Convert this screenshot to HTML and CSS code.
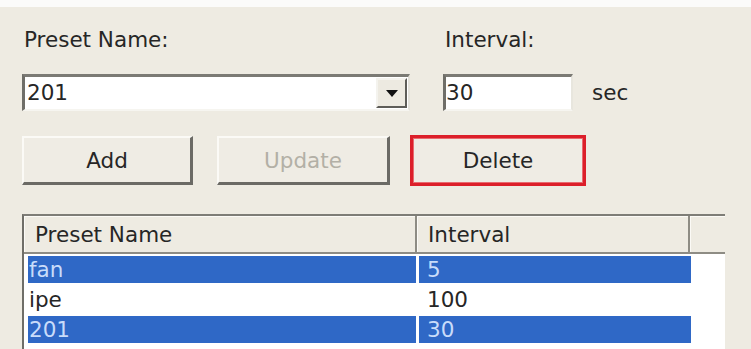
FILE: index.html
```html
<!DOCTYPE html>
<html>
<head>
<meta charset="utf-8">
<link rel="stylesheet" href="styles.css">
</head>
<body>
<div class="top"></div>
<div class="panel">
  <div class="labels">
    <div class="lbl-name">Preset Name:</div>
    <div class="lbl-int">Interval:</div>
  </div>
  <div class="fields">
    <div class="combo">
      <span class="combo-text">201</span>
      <span class="drop"><svg width="12" height="7" viewBox="0 0 12 7"><path d="M0 0H12L6 7Z" fill="#111"/></svg></span>
    </div>
    <div class="input">30</div>
    <div class="unit">sec</div>
  </div>
  <div class="buttons">
    <div class="btn btn-add">Add</div>
    <div class="btn btn-update">Update</div>
    <div class="btn btn-delete">Delete</div>
  </div>
  <div class="list">
    <div class="head">
      <div class="hcell h1">Preset Name</div>
      <div class="hcell h2">Interval</div>
      <div class="hcell h3"></div>
    </div>
    <div class="row sel"><div class="c1">fan</div><div class="c2">5</div></div>
    <div class="row"><div class="c1">ipe</div><div class="c2">100</div></div>
    <div class="row sel"><div class="c1">201</div><div class="c2">30</div></div>
  </div>
</div>
</body>
</html>
```

FILE: styles.css
```css
html, body {
  margin: 0;
  padding: 0;
  width: 751px;
  height: 349px;
  overflow: hidden;
  background: #eeebe2;
  font-family: "DejaVu Sans", Verdana, sans-serif;
  font-size: 21.5px;
  color: #262626;
}
.top {
  height: 7px;
  background: #fbfbfa;
}
.panel {
  padding: 21px 0 0 22px;
}
.labels {
  display: flex;
  height: 24px;
  line-height: 24px;
}
.lbl-name {
  width: 421px;
  padding-left: 2px;
  box-sizing: border-box;
}
.lbl-int {
  padding-left: 2px;
}
.fields {
  display: flex;
  align-items: center;
  margin-top: 22px;
  height: 37px;
}
.combo {
  width: 388px;
  height: 37px;
  box-sizing: border-box;
  background: #fff;
  border-top: 3px solid #7b7a74;
  border-left: 3px solid #6f6e68;
  border-right: 2px solid #e4e2da;
  border-bottom: 2px solid #f6f5f0;
  display: flex;
  align-items: center;
  justify-content: space-between;
  margin-right: 33px;
}
.combo-text {
  padding-left: 2px;
  line-height: 30px;
}
.drop {
  width: 31px;
  height: 30px;
  box-sizing: border-box;
  background: #edeae1;
  border-top: 2px solid #f4f3ee;
  border-left: 2px solid #f4f3ee;
  border-right: 2px solid #5e5d58;
  border-bottom: 2px solid #5e5d58;
  display: flex;
  align-items: center;
  justify-content: center;
  margin-right: 1px;
}
.input {
  width: 130px;
  height: 37px;
  box-sizing: border-box;
  background: #fff;
  border-top: 3px solid #7b7a74;
  border-left: 3px solid #6f6e68;
  border-right: 2px solid #e8e6de;
  border-bottom: 2px solid #f6f5f0;
  padding-left: 0;
  line-height: 31px;
}
.unit {
  margin-left: 19px;
  line-height: 30px;
}
.buttons {
  display: flex;
  margin-top: 25px;
  height: 49px;
}
.btn {
  height: 49px;
  box-sizing: border-box;
  display: flex;
  align-items: center;
  justify-content: center;
  background: #efece4;
}
.btn-add {
  width: 171px;
  border-top: 2px solid #fbfaf6;
  border-left: 2px solid #fbfaf6;
  border-right: 3px solid #6b6a65;
  border-bottom: 3px solid #6b6a65;
}
.btn-update {
  width: 173px;
  margin-left: 24px;
  color: #b3b0a6;
  border-top: 2px solid #fbfaf6;
  border-left: 2px solid #fbfaf6;
  border-right: 3px solid #6b6a65;
  border-bottom: 3px solid #6b6a65;
}
.btn-delete {
  width: 176px;
  margin-left: 20px;
  margin-top: -1px;
  height: 51px;
  border: 3px solid #dc1f2a;
  box-shadow: inset 0 0 0 1px #e86a70;
}
.list {
  margin-top: 29px;
  width: 703px;
  height: 140px;
  box-sizing: border-box;
  background: #fff;
  border-top: 2px solid #7e7d77;
  border-left: 2px solid #6f6e68;
}
.head {
  display: flex;
  height: 36px;
  background: #eeebe2;
  border-bottom: 2px solid #8e8c84;
}
.hcell {
  box-sizing: border-box;
  height: 36px;
  line-height: 38px;
  padding-left: 11px;
  border-right: 2px solid #8e8c84;
  box-shadow: inset 1px 1px 0 #fbfaf6;
}
.h1 { width: 393px; }
.h2 { width: 273px; }
.h3 { flex: 1; border-right: none; }
.row {
  display: flex;
  height: 30px;
  padding: 2px 0 1px 4px;
  box-sizing: border-box;
  line-height: 27px;
}
.c1 {
  width: 388px;
  padding-left: 1px;
  box-sizing: border-box;
}
.c2 {
  width: 272px;
  margin-left: 3px;
  padding-left: 8px;
  box-sizing: border-box;
}
.sel .c1, .sel .c2 {
  background: #2f68c6;
  color: #c9dcfa;
}
```
